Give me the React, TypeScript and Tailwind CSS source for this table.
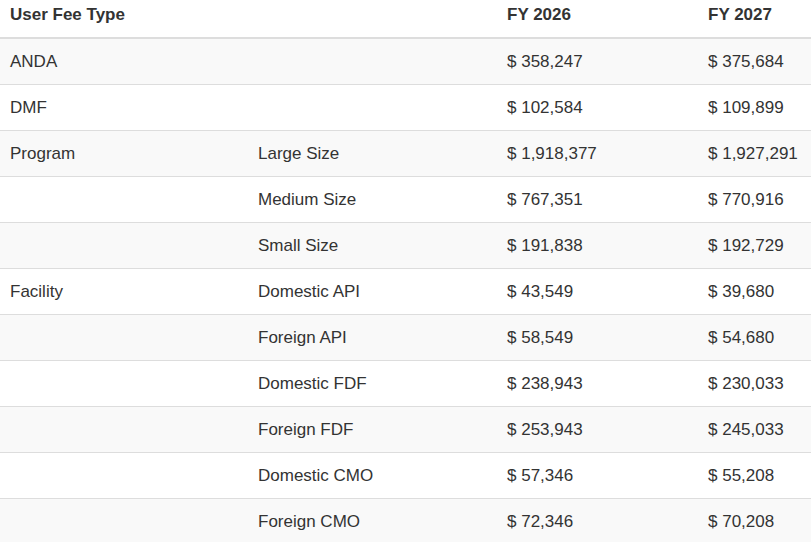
const rows: [string, string, string, string][] = [
  ["ANDA", "", "$ 358,247", "$ 375,684"],
  ["DMF", "", "$ 102,584", "$ 109,899"],
  ["Program", "Large Size", "$ 1,918,377", "$ 1,927,291"],
  ["", "Medium Size", "$ 767,351", "$ 770,916"],
  ["", "Small Size", "$ 191,838", "$ 192,729"],
  ["Facility", "Domestic API", "$ 43,549", "$ 39,680"],
  ["", "Foreign API", "$ 58,549", "$ 54,680"],
  ["", "Domestic FDF", "$ 238,943", "$ 230,033"],
  ["", "Foreign FDF", "$ 253,943", "$ 245,033"],
  ["", "Domestic CMO", "$ 57,346", "$ 55,208"],
  ["", "Foreign CMO", "$ 72,346", "$ 70,208"],
];

export default function App() {
  return (
    <div className="w-[811px] h-[542px] overflow-hidden bg-white text-[#333] font-['Liberation_Sans',Arial,sans-serif] text-[17px] leading-[21px]">
      <table className="w-[811px] border-collapse table-fixed">
        <colgroup>
          <col className="w-[248px]" />
          <col className="w-[249px]" />
          <col className="w-[201px]" />
          <col className="w-[113px]" />
        </colgroup>
        <thead>
          <tr className="border-b-2 border-[#ddd]">
            <th className="text-left font-bold px-[10px] pt-1 pb-3">User Fee Type</th>
            <th className="px-[10px] pt-1 pb-3"></th>
            <th className="text-left font-bold px-[10px] pt-1 pb-3">FY 2026</th>
            <th className="text-left font-bold px-[10px] pt-1 pb-3">FY 2027</th>
          </tr>
        </thead>
        <tbody>
          {rows.map((r, i) => (
            <tr key={i} className={`border-b border-[#ddd] ${i % 2 === 0 ? "bg-[#f9f9f9]" : "bg-white"}`}>
              {r.map((c, j) => (
                <td key={j} className="px-[10px] py-3 whitespace-nowrap">
                  {c}
                </td>
              ))}
            </tr>
          ))}
        </tbody>
      </table>
    </div>
  );
}
